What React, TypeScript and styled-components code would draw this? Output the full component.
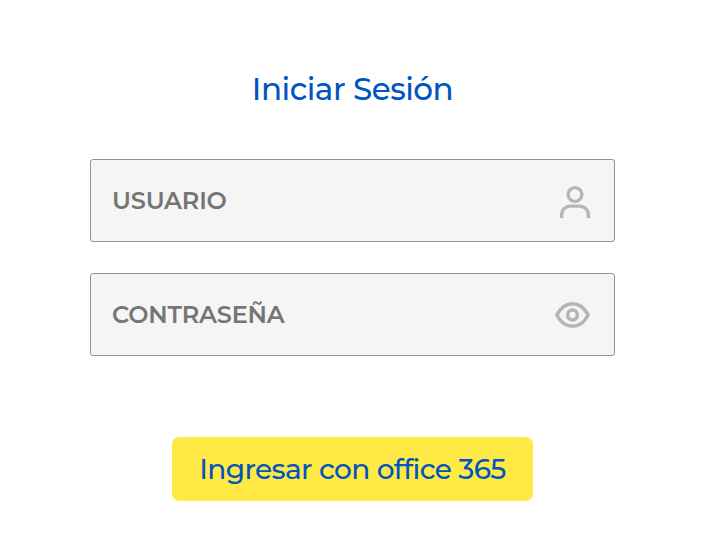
import React from 'react';
import styled, { createGlobalStyle } from 'styled-components';

const GlobalStyle = createGlobalStyle`
  * { box-sizing: border-box; }
  body { margin: 0; background: #fff; font-family: Montserrat, Inter, sans-serif; }
`;

const Form = styled.form`
  display: flex;
  flex-direction: column;
  align-items: center;
  width: 705px;
  height: 541px;
  padding-top: 69px;
`;

const Title = styled.h1`
  margin: 0 0 50px;
  color: #0055c0;
  font-size: 31px;
  font-weight: 500;
  line-height: 40px;
  letter-spacing: -0.5px;
  white-space: nowrap;
`;

const Fields = styled.div`
  display: flex;
  flex-direction: column;
  gap: 31px;
  width: 525px;
  margin-bottom: 81px;
`;

const Field = styled.label`
  display: flex;
  align-items: center;
  height: 83px;
  padding: 0 23px 0 21px;
  border: 1px solid #949494;
  border-radius: 3px;
  background: #f5f5f5;
`;

const Input = styled.input`
  flex: 1;
  min-width: 0;
  height: 40px;
  padding: 0;
  border: 0;
  outline: 0;
  background: transparent;
  font: 600 24px/40px Montserrat, Inter, sans-serif;
  letter-spacing: -0.2px;
  color: #757575;
  &::placeholder { color: #757575; opacity: 1; }
`;

const Icon = styled.svg`
  flex: none;
  fill: none;
  stroke: #b5b5b5;
`;

const Submit = styled.button`
  width: 361px;
  height: 64px;
  padding: 0;
  border: 0;
  border-radius: 7px;
  background: #ffe945;
  color: #0055c0;
  font: 500 28px/63px Montserrat, Inter, sans-serif;
  letter-spacing: -0.6px;
  white-space: nowrap;
`;

export default function App() {
  return (
    <>
      <GlobalStyle />
      <Form onSubmit={(e) => e.preventDefault()}>
        <Title>Iniciar Sesión</Title>
        <Fields>
          <Field>
            <Input placeholder="USUARIO" />
            <Icon width="32" height="34" viewBox="0 0 32 34" strokeWidth="3.3">
              <circle cx="16" cy="10.5" r="6.9" />
              <path d="M2.6 34v-2.9c0-5.3 3.9-9 9.2-9h8.4c5.3 0 9.2 3.7 9.2 9V34" />
            </Icon>
          </Field>
          <Field>
            <Input type="password" placeholder="CONTRASEÑA" />
            <Icon width="37" height="28" viewBox="0 0 37 28" strokeWidth="3.5">
              <path d="M2.8 14C6.6 6.8 12.3 2.7 18.5 2.7S30.4 6.8 34.2 14C30.4 21.2 24.7 25.3 18.5 25.3S6.6 21.2 2.8 14Z" strokeLinejoin="round" />
              <circle cx="18.5" cy="14" r="4.9" />
            </Icon>
          </Field>
        </Fields>
        <Submit type="submit">Ingresar con office 365</Submit>
      </Form>
    </>
  );
}
